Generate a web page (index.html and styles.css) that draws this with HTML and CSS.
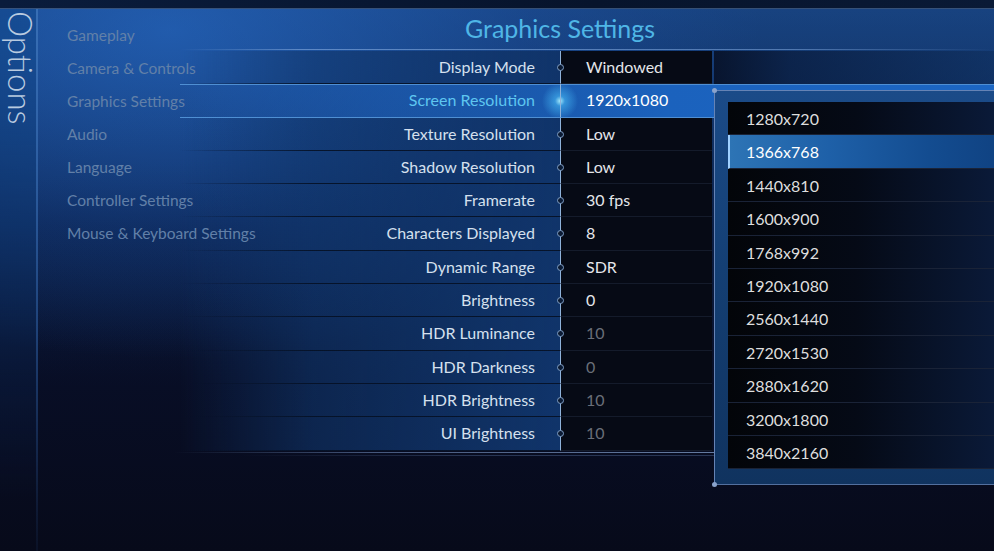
FILE: index.html
```html
<!DOCTYPE html>
<html lang="en">
<head>
  <meta charset="UTF-8">
  <title>Options - Graphics Settings</title>
  <link rel="stylesheet" href="styles.css">
</head>
<body>

  <div class="screen">
    <div class="topbar"></div>

    <div class="main">
      <div class="side">
        <span class="side-title">Options</span>
      </div>

      <div class="panel">
        <ul class="menu">
          <li>Gameplay</li>
          <li>Camera &amp; Controls</li>
          <li>Graphics Settings</li>
          <li>Audio</li>
          <li>Language</li>
          <li>Controller Settings</li>
          <li>Mouse &amp; Keyboard Settings</li>
        </ul>

        <h1 class="title">Graphics Settings</h1>
        <div class="rule"></div>

        <div class="settings">
          <div class="row"><div class="label">Display Mode</div><div class="value">Windowed</div></div>
          <div class="row selected"><div class="label">Screen Resolution</div><div class="value">1920x1080</div></div>
          <div class="row"><div class="label">Texture Resolution</div><div class="value">Low</div></div>
          <div class="row"><div class="label">Shadow Resolution</div><div class="value">Low</div></div>
          <div class="row"><div class="label">Framerate</div><div class="value">30 fps</div></div>
          <div class="row"><div class="label">Characters Displayed</div><div class="value">8</div></div>
          <div class="row"><div class="label">Dynamic Range</div><div class="value">SDR</div></div>
          <div class="row"><div class="label">Brightness</div><div class="value">0</div></div>
          <div class="row"><div class="label">HDR Luminance</div><div class="value dim">10</div></div>
          <div class="row"><div class="label">HDR Darkness</div><div class="value dim">0</div></div>
          <div class="row"><div class="label">HDR Brightness</div><div class="value dim">10</div></div>
          <div class="row"><div class="label">UI Brightness</div><div class="value dim">10</div></div>
        </div>
        <div class="rule bottom"></div>
      </div>
    </div>

    <!-- lista desplegable de resoluciones -->
    <div class="dropdown">
      <ul class="res-list">
        <li>1280x720</li>
        <li class="active">1366x768</li>
        <li>1440x810</li>
        <li>1600x900</li>
        <li>1768x992</li>
        <li>1920x1080</li>
        <li>2560x1440</li>
        <li>2720x1530</li>
        <li>2880x1620</li>
        <li>3200x1800</li>
        <li>3840x2160</li>
      </ul>
    </div>
  </div>

</body>
</html>
```

FILE: styles.css
```css
body {
  margin: 0;
  background: #080b1c;
  font-family: 'Lato', 'Noto Sans', sans-serif;
}
.screen {
  position: relative;
  width: 994px;
  height: 551px;
  overflow: hidden;
  background:
    radial-gradient(ellipse 720px 400px at 170px 30px, rgba(32,92,175,0.9), rgba(22,66,138,0.45) 50%, rgba(10,30,70,0) 82%),
    linear-gradient(to bottom, #0f3162 0, #0a1d42 40%, #080e26 68%, #070a1a 100%);
}
/* franja superior */
.topbar {
  height: 8px;
  background: linear-gradient(to right, #0a1c3c, #07142c 60%, #0a1a36);
  border-bottom: 1px solid rgba(110,150,205,0.45);
}
.main {
  display: flex;
  height: 542px;
}
.side {
  width: 36px;
  flex-shrink: 0;
  border-right: 2px solid;
  border-image: linear-gradient(to bottom, rgba(70,125,195,0.7), rgba(50,100,170,0.5) 60%, rgba(30,60,110,0.15)) 1;
  background: linear-gradient(to bottom, rgba(20,78,150,0.6), rgba(12,50,105,0.4) 50%, rgba(8,20,50,0) 90%);
}
.side-title {
  display: block;
  writing-mode: vertical-rl;
  width: 40px;
  line-height: 38px;
  padding-top: 2px;
  font-size: 33px;
  font-weight: 300;
  color: #b9cbe0;
}
.panel {
  flex: 1;
  display: grid;
  grid-template-columns: 142px 226px 154px 154px 1fr;
  grid-template-rows: 42px auto 1fr;
  background: linear-gradient(to bottom, rgba(40,100,185,0.35), rgba(20,60,130,0.1) 40%, rgba(0,0,0,0) 70%);
}
/* menu lateral */
.menu {
  grid-column: 1;
  grid-row: 1 / 4;
  position: relative;
  z-index: 2;
  list-style: none;
  margin: 0;
  padding: 10px 0 0 29px;
}
.menu li {
  height: 33px;
  line-height: 33px;
  white-space: nowrap;
  font-size: 15.5px;
  color: #6280a8;
}
.title {
  grid-column: 3 / 5;
  grid-row: 1;
  margin: 0;
  text-align: center;
  line-height: 38px;
  font-size: 25px;
  font-weight: 400;
  color: #4fb6e6;
}
.rule {
  grid-column: 2 / 6;
  grid-row: 1;
  align-self: end;
  height: 1px;
  margin-bottom: 1px;
  background: linear-gradient(to right, rgba(120,160,215,0), rgba(120,160,215,0.7) 15%, rgba(120,160,215,0.6) 75%, rgba(120,160,215,0));
}
.rule.bottom {
  grid-row: 3;
  grid-column: 1 / 5;
  align-self: start;
  height: 4px;
  margin: 1px 0 0;
  background:
    linear-gradient(to right, rgba(120,150,200,0) 20%, rgba(120,150,200,0.55) 50%, rgba(140,170,215,0.7)) top / 100% 1px no-repeat,
    linear-gradient(to right, rgba(100,130,180,0) 30%, rgba(100,130,180,0.35) 65%) bottom / 100% 1px no-repeat;
}
/* tabla de ajustes */
.settings {
  grid-column: 2 / 6;
  grid-row: 2;
  background: linear-gradient(to right, rgba(6,14,34,0) 534px, rgba(6,14,34,0.85) 534px, rgba(9,28,62,0.75) 75%, rgba(12,42,86,0.5)) top / 100% 40px no-repeat;
}
.row {
  display: grid;
  grid-template-columns: 380px 152px;
  height: 33.3px;
  font-size: 16px;
}
.label {
  text-align: right;
  padding-right: 25px;
  line-height: 32px;
  color: #d5e0ee;
  border-bottom: 1px solid;
  border-image: linear-gradient(to right, rgba(5,16,36,0), rgba(5,16,36,0.9) 35%) 1;
  background: linear-gradient(to right, rgba(16,54,108,0), rgba(16,54,108,0.6) 35%, #10346a 100%);
}
.value {
  position: relative;
  padding-left: 25px;
  line-height: 32px;
  color: #e4e6ea;
  background: #060a15;
  border-left: 1px solid #8fb2da;
  border-bottom: 1px solid #141b2b;
}
.value::before {
  content: '';
  position: absolute;
  left: -4px;
  top: 13px;
  width: 5px;
  height: 5px;
  border: 1px solid #7f9fc6;
  border-radius: 50%;
  background: #0b1a33;
}
.value.dim {
  color: #6a6f79;
}
.row.selected {
  background:
    radial-gradient(circle at 380px 50%, rgba(170,240,255,0.95) 0, rgba(70,185,245,0.6) 5px, rgba(40,140,230,0) 18px),
    linear-gradient(to right, rgba(28,96,185,0) 0, rgba(28,96,185,0.55) 25%, #1b62bd 60%, #1c66c3 100%);
  box-shadow: inset 0 1px 0 #4f8fd3, inset 0 -1px 0 #4f8fd3;
}
.row.selected .label,
.row.selected .value {
  background: none;
  border-bottom-color: transparent;
  border-image: none;
}
.row.selected .label {
  color: #5ec6f0;
}
.row.selected .value {
  color: #fff;
}
.row.selected .value::before {
  display: none;
}
/* lista desplegable */
.dropdown {
  position: absolute;
  left: 714px;
  top: 90px;
  width: 300px;
  height: 395px;
  padding: 11px 0 0 13px;
  box-sizing: border-box;
  border-left: 1px solid #6583b5;
  border-top: 1px solid #6583b5;
  border-bottom: 1px solid #53709f;
  background: linear-gradient(to bottom, #1b4b88, #143f74 45%, #10335f);
}
.dropdown::before,
.dropdown::after {
  content: '';
  position: absolute;
  left: -3px;
  width: 5px;
  height: 5px;
  border-radius: 50%;
  background: #8aa3cc;
}
.dropdown::before { top: -3px; }
.dropdown::after { bottom: -3px; }
.res-list {
  list-style: none;
  margin: 0;
  padding: 0;
}
.res-list li {
  height: 33.4px;
  line-height: 33px;
  padding-left: 18px;
  box-sizing: border-box;
  font-size: 16px;
  color: #dedede;
  border-bottom: 1px solid #1a2337;
  background: linear-gradient(to right, #030509, #050a16 45%, #0b1c3d);
}
.res-list li.active {
  color: #fff;
  padding-left: 16px;
  border-left: 2px solid #9fd0ff;
  background: linear-gradient(to right, #2d74b5, #1e60a8 35%, #134c90 70%, #0f407f);
}
```
